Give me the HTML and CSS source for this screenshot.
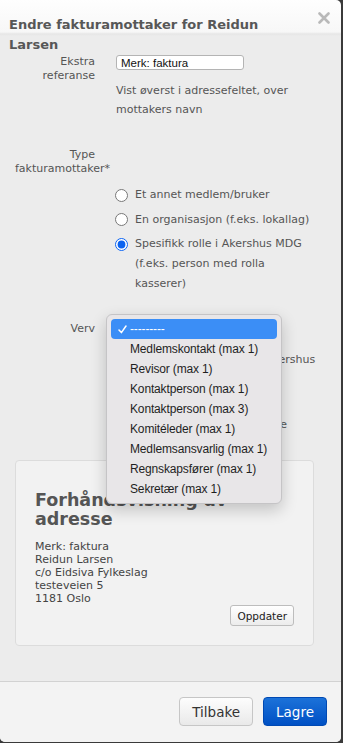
FILE: index.html
```html
<!DOCTYPE html>
<html lang="no">
<head>
<meta charset="utf-8">
<title>Endre fakturamottaker</title>
<link rel="stylesheet" href="styles.css">
</head>
<body>
<div class="modal">
  <div class="head">
    <h1 class="title">Endre fakturamottaker for Reidun Larsen</h1>
    <span class="close" aria-label="Lukk">
      <svg width="12" height="12" viewBox="0 0 12 12"><path d="M1.5 1.5 L10.5 10.5 M10.5 1.5 L1.5 10.5" stroke="#b9b9b9" stroke-width="2.6" stroke-linecap="round"/></svg>
    </span>
  </div>

  <div class="form">
    <div class="row">
      <label class="lbl" for="ref">Ekstra referanse</label>
      <div class="field">
        <input id="ref" class="ref-input" type="text" value="Merk: faktura">
        <p class="help">Vist øverst i adressefeltet, over mottakers navn</p>
      </div>
    </div>

    <div class="row row-type">
      <div class="lbl">Type fakturamottaker*</div>
      <div class="field radios">
        <label class="radio"><input type="radio" name="type"><span>Et annet medlem/bruker</span></label>
        <label class="radio"><input type="radio" name="type"><span>En organisasjon (f.eks. lokallag)</span></label>
        <label class="radio"><input type="radio" name="type" checked><span>Spesifikk rolle i Akershus MDG (f.eks. person med rolla kasserer)</span></label>
      </div>
    </div>

    <div class="row row-verv">
      <div class="lbl">Verv</div>
      <div class="field verv">
        <div class="select">---------</div>
        <p class="help help-verv">Fakturaen sendes til verv i Akershus MDG.</p>
        <p class="help help-verv2">Vi bruker adressen til den<br>som har vervet ved utsendelse</p>
        <div class="menu">
          <div class="item sel"><svg class="check" width="9" height="9" viewBox="0 0 9 9"><path d="M1 5 L3.4 7.6 L8 1" fill="none" stroke="#fff" stroke-width="1.5" stroke-linecap="round" stroke-linejoin="round"/></svg>---------</div>
          <div class="item">Medlemskontakt (max 1)</div>
          <div class="item">Revisor (max 1)</div>
          <div class="item">Kontaktperson (max 1)</div>
          <div class="item">Kontaktperson (max 3)</div>
          <div class="item">Komitéleder (max 1)</div>
          <div class="item">Medlemsansvarlig (max 1)</div>
          <div class="item">Regnskapsfører (max 1)</div>
          <div class="item">Sekretær (max 1)</div>
        </div>
      </div>
    </div>
  </div>

  <div class="card">
    <h2>Forhåndsvisning av adresse</h2>
    <div class="addr">
      <div>Merk: faktura</div>
      <div>Reidun Larsen</div>
      <div>c/o Eidsiva Fylkeslag</div>
      <div>testeveien 5</div>
      <div>1181 Oslo</div>
    </div>
    <div class="upd-row"><button class="upd" type="button">Oppdater</button></div>
  </div>

  <div class="foot">
    <button class="btn btn-back" type="button">Tilbake</button>
    <button class="btn btn-save" type="button">Lagre</button>
  </div>
</div>
</body>
</html>
```

FILE: styles.css
```css
html, body {
  margin: 0;
  padding: 0;
}
body {
  background: #3a3a3a;
  font-family: "DejaVu Sans", Verdana, sans-serif;
  width: 343px;
  height: 743px;
}
.modal {
  width: 341px;
  height: 742px;
  box-sizing: border-box;
  display: flex;
  flex-direction: column;
  border-radius: 0 5px 5px 5px;
  overflow: hidden;
  background:
    linear-gradient(#fefefe 0, #f7f7f7 32px, #e6e6e6 34px, #ececec 36px) top left / 100% 36px no-repeat,
    #ececec;
}
.head {
  display: flex;
  align-items: flex-start;
}
.title {
  margin: 0;
  flex: 1;
  padding: 15px 0 0 9px;
  font-size: 13px;
  font-weight: bold;
  line-height: 20px;
  color: #575757;
}
.close {
  flex: none;
  width: 12px;
  height: 12px;
  margin: 12px 11px 0 14px;
  display: block;
}
.close svg { display: block; }

.form {
  padding: 0 21px 0 15px;
}
.row {
  display: grid;
  grid-template-columns: 80px 1fr;
  column-gap: 21px;
}
.lbl {
  text-align: right;
  font-size: 11px;
  line-height: 14px;
  color: #555;
}
.field {
  min-width: 0;
}
.ref-input {
  display: block;
  box-sizing: border-box;
  width: 128px;
  height: 15px;
  margin: 0;
  padding: 0 4px;
  border: 1px solid #b4b4b4;
  border-radius: 3px;
  background: #fff;
  font-family: "Liberation Sans", Arial, sans-serif;
  font-size: 11.5px;
  color: #111;
  outline: none;
}
.help {
  margin: 11px 0 0;
  font-size: 11px;
  line-height: 19px;
  color: #555;
}
.row-type {
  margin-top: 29px;
}
.radios {
  padding-top: 37px;
  display: flex;
  flex-direction: column;
  gap: 4.5px;
}
.radio {
  display: flex;
  align-items: flex-start;
  gap: 7px;
  font-size: 11px;
  line-height: 20px;
  color: #555;
}
.radio span {
  max-width: 176px;
}
.radio input {
  flex: none;
  width: 13px;
  height: 13px;
  margin: 3.5px 0 0 -1px;
  accent-color: #0b63f0;
}
.row-verv {
  margin-top: 28px;
}
.verv {
  position: relative;
}
.select {
  height: 16px;
  box-sizing: border-box;
  width: 100px;
  border: 1px solid #b4b4b4;
  border-radius: 3px;
  background: #fff;
  font-size: 10px;
  line-height: 14px;
  padding-left: 4px;
}
.help-verv {
  margin-top: 12px;
}
.help-verv2 {
  margin-top: 8px;
}
.menu {
  position: absolute;
  left: -10px;
  top: -8px;
  z-index: 10;
  width: 176px;
  box-sizing: border-box;
  padding: 4px;
  background: #e8e6e8;
  border: 1px solid #c5c4c6;
  border-radius: 6px;
  box-shadow: 0 6px 16px rgba(0, 0, 0, 0.2);
  font-family: "Liberation Sans", Arial, sans-serif;
  font-size: 12px;
  letter-spacing: -0.15px;
  color: #1f1f1f;
}
.item {
  position: relative;
  height: 20px;
  line-height: 20px;
  padding-left: 19px;
  border-radius: 4px;
  white-space: nowrap;
}
.item.sel {
  background: #3b8ef6;
  color: #fff;
}
.check {
  position: absolute;
  left: 7px;
  top: 6px;
}

.card {
  margin: 26px 27px 0 15px;
  padding: 30px 19px 19px;
  background: #f2f2f2;
  border: 1px solid #dcdcdc;
  border-radius: 4px;
}
.card h2 {
  margin: 0;
  font-size: 17.5px;
  line-height: 19px;
  font-weight: bold;
  color: #555;
}
.addr {
  margin-top: 11px;
  font-size: 11px;
  line-height: 13px;
  color: #444;
}
.upd-row {
  display: flex;
  justify-content: flex-end;
}
.upd {
  height: 21px;
  box-sizing: border-box;
  margin: 0;
  padding: 0 6px;
  font-family: "DejaVu Sans", Verdana, sans-serif;
  font-size: 10.5px;
  color: #222;
  background: linear-gradient(#ffffff, #ececec);
  border: 1px solid #bdbdbd;
  border-radius: 3px;
}

.foot {
  margin-top: auto;
  height: 61px;
  box-sizing: border-box;
  border-top: 1px solid #d2d2d2;
  background: #f3f3f3;
  padding: 15px 14px 0 0;
  display: flex;
  justify-content: flex-end;
  align-items: flex-start;
  gap: 10px;
}
.btn {
  height: 29px;
  box-sizing: border-box;
  margin: 0;
  padding: 0 12px;
  font-family: "DejaVu Sans", Verdana, sans-serif;
  font-size: 13.5px;
  border-radius: 4px;
}
.btn-back {
  color: #333;
  background: linear-gradient(#fdfdfd, #e9e9e9);
  border: 1px solid #c6c6c6;
}
.btn-save {
  color: #fff;
  background: linear-gradient(#1c72d9, #0050c4);
  border: 1px solid #0049b3;
}
```
